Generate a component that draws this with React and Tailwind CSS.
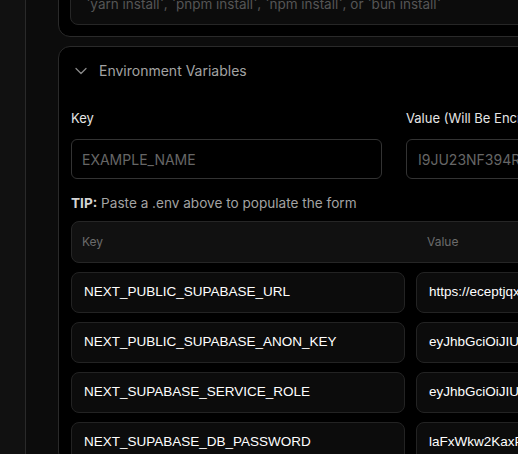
import React from "react";
import { ChevronDown } from "lucide-react";

const envRows = [
    { key: "NEXT_PUBLIC_SUPABASE_URL", value: "https://eceptjqxmbwzvnhtkfsq.supabase.co" },
    { key: "NEXT_PUBLIC_SUPABASE_ANON_KEY", value: "eyJhbGciOiJIUzI1NiIsInR5cCI6IkpXVCJ9" },
    { key: "NEXT_SUPABASE_SERVICE_ROLE", value: "eyJhbGciOiJIUzI1NiIsInR5cCI6IkpXVCJ9" },
    { key: "NEXT_SUPABASE_DB_PASSWORD", value: "laFxWkw2KaxP9qL" },
];

const App = () => {
    return (
        <div className="flex h-[454px] w-[518px] overflow-hidden bg-[#0c0c0c] font-['Inter',sans-serif]">
            {/* Sidebar */}
            <div className="w-[26px] shrink-0 border-r border-[#2a2a2a] bg-[#111111]" />

            {/* Main */}
            <div className="flex-1 pl-[32px]">
                <div className="w-[760px]">
                    {/* Install command card */}
                    <div className="mt-[-31px] rounded-xl border border-[#2a2a2a] bg-black p-[11px]">
                        <div className="rounded-lg border border-[#262626] bg-[#0c0c0c] px-[15px] pt-3 pb-[10px] text-[13.5px] leading-5 text-[#555555]">
                            `yarn install`, `pnpm install`, `npm install`, or `bun install`
                        </div>
                    </div>

                    {/* Environment variables card */}
                    <div className="mt-[9px] rounded-xl border border-[#2a2a2a] bg-black">
                        <div className="flex items-center gap-2 px-3 py-[13px]">
                            <ChevronDown className="h-5 w-5 text-[#8a8a8a]" strokeWidth={1.5} />
                            <span className="text-[14px] text-[#a3a3a3]">Environment Variables</span>
                        </div>

                        <div className="px-3 pt-[15px]">
                            {/* Form */}
                            <div className="flex gap-[24px]">
                                <div className="w-[311px]">
                                    <div className="mb-3 text-[13px] leading-[18px] text-[#e5e5e5]">Key</div>
                                    <div className="flex h-10 items-center rounded-md border border-[#333333] px-[10px] text-[14px] text-[#666666]">
                                        EXAMPLE_NAME
                                    </div>
                                </div>
                                <div className="w-[311px]">
                                    <div className="mb-3 text-[13px] leading-[18px] text-[#e5e5e5]">Value (Will Be Encrypted)</div>
                                    <div className="flex h-10 items-center rounded-md border border-[#333333] px-[11px] text-[14px] text-[#666666]">
                                        I9JU23NF394R6HH
                                    </div>
                                </div>
                            </div>

                            <p className="mt-[15px] text-[13.6px] leading-[18px] text-[#a3a3a3]">
                                <span className="font-bold text-[#d4d4d4]">TIP:</span> Paste a .env above to populate the form
                            </p>

                            {/* Table */}
                            <div className="mt-[9px] flex h-[42px] items-center rounded-lg border border-[#262626] bg-[#111111] text-[12px] text-[#6b6b6b]">
                                <span className="w-[355px] pl-[10px]">Key</span>
                                <span>Value</span>
                            </div>

                            <div className="mt-[9px] flex flex-col gap-[9px] font-['Liberation_Sans',sans-serif] text-[13.5px] text-white">
                                {envRows.map((row) => (
                                    <div key={row.key} className="flex gap-[11px]">
                                        <div className="flex h-[41px] w-[334px] items-center rounded-lg border border-[#232323] bg-[#0c0c0c] px-[12px]">
                                            {row.key}
                                        </div>
                                        <div className="flex h-[41px] w-[334px] items-center rounded-lg border border-[#232323] bg-[#0c0c0c] px-[12px]">
                                            {row.value}
                                        </div>
                                    </div>
                                ))}
                            </div>
                        </div>
                    </div>
                </div>
            </div>
        </div>
    );
};

export default App;
